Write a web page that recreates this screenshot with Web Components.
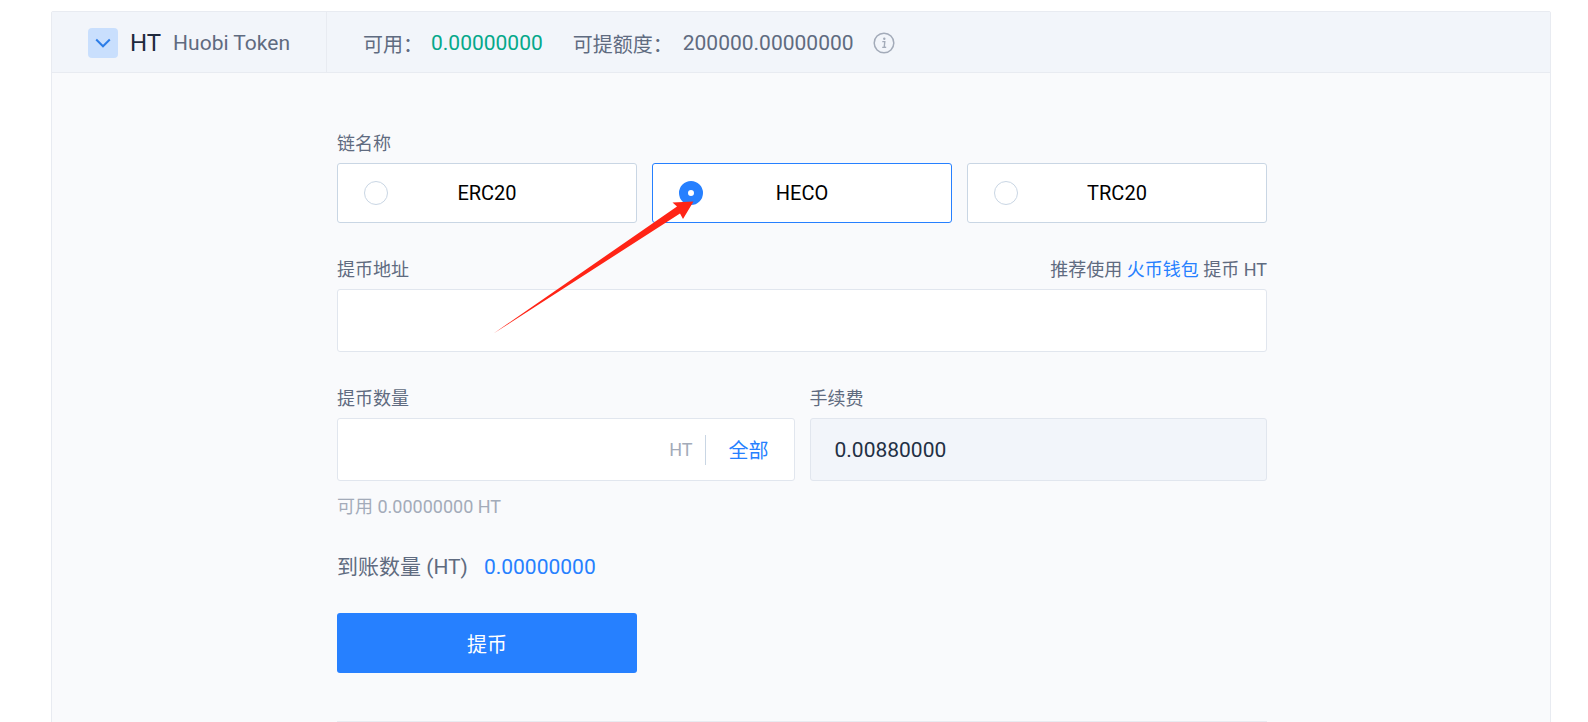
<!DOCTYPE html>
<html lang="zh">
<head>
<meta charset="utf-8">
<title>提币</title>
<style>
  html, body { margin: 0; height: 100%; overflow: hidden; background: #fff; }
  body {
    font-family: Roboto, "Noto Sans CJK SC", sans-serif;
    font-size: 18px;
    color: #5f6b80;
  }
</style>
</head>
<body>
<withdraw-card>
  <coin-header slot="header" symbol="HT" name="Huobi Token" available="0.00000000" quota="200000.00000000"></coin-header>
  <form-row>
    <form-field label="链名称" style="flex:1">
      <chain-picker>
        <chain-option label="ERC20"></chain-option>
        <chain-option label="HECO" checked></chain-option>
        <chain-option label="TRC20"></chain-option>
      </chain-picker>
    </form-field>
  </form-row>
  <form-row style="margin-top:34px">
    <form-field label="提币地址" style="flex:1">
      <span slot="aside">推荐使用 <b style="font-weight:400;color:#2680ff">火币钱包</b> 提币 HT</span>
      <text-box></text-box>
    </form-field>
  </form-row>
  <form-row style="margin-top:34px">
    <form-field label="提币数量" style="flex:1">
      <text-box unit="HT" action="全部"></text-box>
    </form-field>
    <form-field label="手续费" style="flex:1">
      <text-box readonly value="0.00880000"></text-box>
    </form-field>
  </form-row>
  <withdraw-summary></withdraw-summary>
</withdraw-card>
<red-arrow></red-arrow>

<script type="module">
class WithdrawCard extends HTMLElement {
  constructor() {
    super();
    this.attachShadow({ mode: 'open' });
    this.shadowRoot.innerHTML = `
      <style>
        :host {
          display: block;
          box-sizing: border-box;
          margin: 11px 37px 0 51px;
          height: 800px;
          background: #f9fafc;
          border: 1px solid #e8ebf1;
          border-radius: 2px;
        }
        .body {
          width: 930px;
          margin-left: 285px;
          padding-top: 58px;
        }
      </style>
      <slot name="header"></slot>
      <div class="body"><slot></slot></div>
    `;
  }
}

class CoinHeader extends HTMLElement {
  constructor() {
    super();
    this.attachShadow({ mode: 'open' });
  }

  connectedCallback() {
    const symbol = this.getAttribute('symbol');
    const name = this.getAttribute('name');
    const available = this.getAttribute('available');
    const quota = this.getAttribute('quota');

    this.shadowRoot.innerHTML = `
      <style>
        :host {
          display: flex;
          height: 60px;
          background: #f2f5fa;
          border-bottom: 1px solid #e8ebf1;
          color: #5f6b80;
          font-size: 20px;
        }
        .coin {
          box-sizing: border-box;
          width: 275px;
          padding: 2px 0 0 36px;
          display: flex;
          align-items: center;
          border-right: 1px solid #e8ebf1;
        }
        .toggle {
          width: 30px;
          height: 30px;
          border-radius: 4px;
          background: #c9dffd;
          display: flex;
          align-items: center;
          justify-content: center;
        }
        .symbol { margin-left: 12px; font-size: 24px; color: #1f2a3d; }
        .name { margin-left: 12px; font-size: 21px; }
        .stats { display: flex; align-items: center; padding: 2px 0 0 36px; }
        .num { font-size: 21px; }
        .green { color: #05a88a; }
        .info { margin-left: 19px; display: block; }
      </style>
      <div class="coin">
        <div class="toggle">
          <svg width="16" height="10" viewBox="0 0 16 10" fill="none">
            <path d="M1.2 1.5l6.8 6.8 6.8-6.8" stroke="#2c7de8" stroke-width="2"/>
          </svg>
        </div>
        <span class="symbol">${symbol}</span>
        <span class="name">${name}</span>
      </div>
      <div class="stats">
        <span>可用：</span>
        <span class="num green" style="margin-left:8px">${available}</span>
        <span style="margin-left:30px">可提额度：</span>
        <span class="num" style="margin-left:10px">${quota}</span>
        <svg class="info" width="22" height="22" viewBox="0 0 22 22" fill="none">
          <circle cx="11" cy="11" r="9.8" stroke="#a3abb9" stroke-width="1.5"/>
          <circle cx="11.3" cy="6.8" r="1.2" fill="#a3abb9"/>
          <path d="M9.3 9.6h2.5l-.6 5.6h1.4M9.2 15.4h4" stroke="#a3abb9" stroke-width="1.4"/>
        </svg>
      </div>
    `;
  }
}

class FormRow extends HTMLElement {
  constructor() {
    super();
    this.attachShadow({ mode: 'open' });
    this.shadowRoot.innerHTML = `
      <style>
        :host { display: flex; gap: 15px; }
      </style>
      <slot></slot>
    `;
  }
}

class FormField extends HTMLElement {
  constructor() {
    super();
    this.attachShadow({ mode: 'open' });
  }

  connectedCallback() {
    this.shadowRoot.innerHTML = `
      <style>
        :host { display: block; min-width: 0; }
        .top {
          display: flex;
          justify-content: space-between;
          height: 26px;
          line-height: 26px;
          margin-bottom: 6px;
          font-size: 18px;
          color: #5f6b80;
        }
      </style>
      <div class="top">
        <span>${this.getAttribute('label')}</span>
        <slot name="aside"></slot>
      </div>
      <slot></slot>
    `;
  }
}

class ChainPicker extends HTMLElement {
  constructor() {
    super();
    this.attachShadow({ mode: 'open' });
    this.shadowRoot.innerHTML = `
      <style>
        :host { display: grid; grid-template-columns: repeat(3, 300px); column-gap: 15px; }
      </style>
      <slot></slot>
    `;
  }
}

class ChainOption extends HTMLElement {
  constructor() {
    super();
    this.attachShadow({ mode: 'open' });
  }

  connectedCallback() {
    const checked = this.hasAttribute('checked');
    this.shadowRoot.innerHTML = `
      <style>
        :host {
          box-sizing: border-box;
          display: grid;
          grid-template-columns: 1fr auto 1fr;
          align-items: center;
          height: 60px;
          background: #fff;
          border: 1px solid ${checked ? '#2680ff' : '#c9d6e4'};
          border-radius: 3px;
          color: #000;
          font-size: 20px;
        }
        .radio {
          box-sizing: border-box;
          width: 24px;
          height: 24px;
          margin-left: 26px;
          border-radius: 50%;
          border: 1px solid #c9d6e4;
          background: #fff;
        }
        .radio.on {
          border: 9px solid #2680ff;
        }
      </style>
      <span class="radio ${checked ? 'on' : ''}"></span>
      <span>${this.getAttribute('label')}</span>
    `;
  }
}

class TextBox extends HTMLElement {
  constructor() {
    super();
    this.attachShadow({ mode: 'open' });
  }

  connectedCallback() {
    const readonly = this.hasAttribute('readonly');
    const value = this.getAttribute('value') ?? '';
    const unit = this.getAttribute('unit');
    const action = this.getAttribute('action');

    this.shadowRoot.innerHTML = `
      <style>
        :host {
          box-sizing: border-box;
          display: flex;
          align-items: center;
          height: 63px;
          padding: 0 25px 0 24px;
          background: ${readonly ? '#f2f5fa' : '#fff'};
          border: 1px solid #e1e6ee;
          border-radius: 3px;
          font-size: 21px;
          color: #233044;
        }
        .grow { flex: 1; }
        .unit { font-size: 18px; color: #a3abb9; }
        .sep { width: 1px; height: 30px; margin: 0 23px 0 12px; background: #c9d6e4; }
        .action { font-size: 20px; color: #2680ff; }
      </style>
      <span class="grow">${value}</span>
      ${unit ? `<span class="unit">${unit}</span><span class="sep"></span>` : ''}
      ${action ? `<span class="action">${action}</span>` : ''}
    `;
  }
}

class WithdrawSummary extends HTMLElement {
  constructor() {
    super();
    this.attachShadow({ mode: 'open' });
    this.shadowRoot.innerHTML = `
      <style>
        :host { display: block; }
        .hint { margin-top: 13px; height: 26px; line-height: 26px; font-size: 18px; color: #a3abb9; }
        .arrive {
          margin-top: 33px;
          height: 28px;
          line-height: 28px;
          display: flex;
          font-size: 21px;
          color: #5f6b80;
        }
        .arrive b { margin-left: 16px; font-weight: 400; font-size: 21px; color: #2680ff; }
        button {
          display: block;
          width: 300px;
          height: 60px;
          margin-top: 32px;
          border: 0;
          border-radius: 3px;
          background: #2680ff;
          color: #fff;
          font: inherit;
          font-size: 20px;
        }
        hr { margin: 48px 0 0; border: 0; border-top: 1px solid #e8ebf1; }
      </style>
      <div class="hint">可用 0.00000000 HT</div>
      <div class="arrive"><span>到账数量 (HT)</span><b>0.00000000</b></div>
      <button type="button">提币</button>
      <hr>
    `;
  }
}

// annotation drawn over the screenshot
class RedArrow extends HTMLElement {
  constructor() {
    super();
    this.attachShadow({ mode: 'open' });
    this.shadowRoot.innerHTML = `
      <style>
        :host { position: absolute; left: 0; top: 0; pointer-events: none; }
        svg { display: block; }
      </style>
      <svg width="1588" height="722">
        <polygon fill="#ff2416" points="493.5,333.5 677,206.5 672.5,202.5 693.5,201.5 683,219 680,213.5"/>
      </svg>
    `;
  }
}

customElements.define('withdraw-card', WithdrawCard);
customElements.define('coin-header', CoinHeader);
customElements.define('form-row', FormRow);
customElements.define('form-field', FormField);
customElements.define('chain-picker', ChainPicker);
customElements.define('chain-option', ChainOption);
customElements.define('text-box', TextBox);
customElements.define('withdraw-summary', WithdrawSummary);
customElements.define('red-arrow', RedArrow);
</script>
</body>
</html>
